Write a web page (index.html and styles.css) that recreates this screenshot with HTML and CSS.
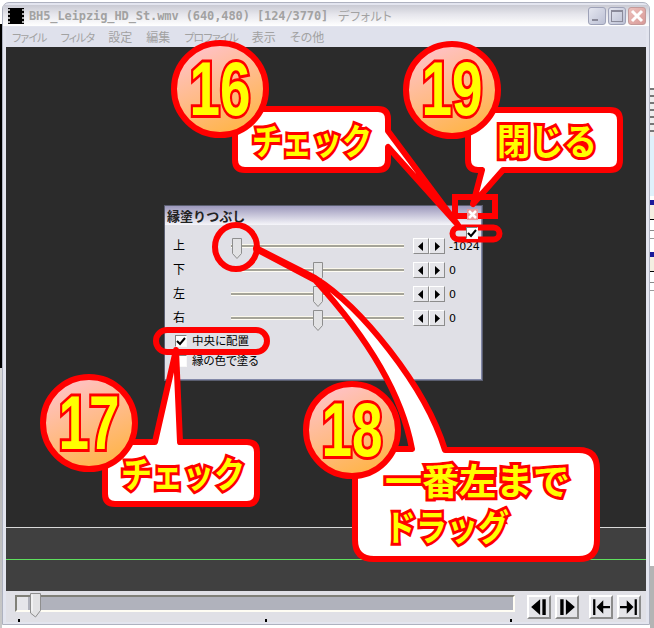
FILE: index.html
```html
<!DOCTYPE html>
<html lang="ja">
<head>
<meta charset="utf-8">
<title>BH5_Leipzig_HD_St.wmv</title>
<link rel="stylesheet" href="styles.css">
</head>
<body>
<div class="desktop">
  <div class="sliver sliver-left-black"></div>
  <div class="sliver sliver-left-grey"></div>
  <div class="sliver sliver-right-a"></div>
  <div class="sliver sliver-right-b"></div>
  <div class="sliver sliver-right-c"></div>
  <div class="sliver sliver-right-d"></div>
  <div class="sliver sliver-right-e"></div>

  <div class="window">
    <header class="titlebar">
      <svg class="film" width="16" height="16" viewBox="0 0 16 16"><rect width="16" height="16" fill="#000"/><path d="M0 1h2v2H0zM0 5h2v2H0zM0 9h2v2H0zM0 13h2v2H0zM14 1h2v2h-2zM14 5h2v2h-2zM14 9h2v2h-2zM14 13h2v2h-2z" fill="#aaa"/></svg>
      <span class="title-text">BH5_Leipzig_HD_St.wmv (640,480) [124/3770]</span>
      <span class="title-profile">デフォルト</span>
      <span class="win-controls">
        <span class="win-btn"><svg width="18" height="18" viewBox="0 0 18 18"><rect x="4" y="12" width="6" height="2" fill="#8a8a9a"/></svg></span>
        <span class="win-btn"><svg width="18" height="18" viewBox="0 0 18 18"><rect x="3.500" y="3.500" width="11" height="11" fill="none" stroke="#8a8a9a"/><rect x="3" y="3" width="12" height="2" fill="#8a8a9a"/></svg></span>
        <span class="win-btn win-close"><svg width="18" height="18" viewBox="0 0 18 18"><path d="M4 4l10 10M14 4L4 14" stroke="#fff" stroke-width="3"/></svg></span>
      </span>
    </header>
    <nav class="menu">
      <span class="m-kana">ファイル</span><span class="m-kana">フィルタ</span><span class="m-kanji">設定</span><span class="m-kanji">編集</span><span class="m-kana">プロファイル</span><span class="m-kanji">表示</span><span class="m-kanji">その他</span>
    </nav>
    <main class="view"></main>
    <div class="band band-top"></div>
    <div class="band band-bottom"></div>
    <footer class="seek">
      <div class="seek-track"><span class="seek-start"></span>
        <svg class="seek-thumb" width="12" height="25" viewBox="0 0 12 25"><path d="M.5.5h10v17L5.500 24 .5 20z" fill="#e2e2e4" stroke="#8e8e8e"/><path d="M1.500 1.500h1v17h-1z" fill="#fff"/></svg>
      </div>
      <div class="transport">
        <span class="tbtn"><svg width="18" height="18" viewBox="0 0 16 16"><path d="M1 8l8-7v14zM11 1h3v14h-3z"/></svg></span>
        <span class="tbtn"><svg width="18" height="18" viewBox="0 0 16 16"><path d="M2 1h3v14H2zM7 1l8 7-8 7z"/></svg></span>
        <span class="tbtn tbtn-far"><svg width="18" height="18" viewBox="0 0 16 16"><path d="M1 1h2v14H1zM4 8l6-6v5h6v2h-6v5z"/></svg></span>
        <span class="tbtn"><svg width="18" height="18" viewBox="0 0 16 16"><path d="M13 1h2v14h-2zM12 8L6 2v5H0v2h6v5z"/></svg></span>
      </div>
      <span class="tick tick-a"></span><span class="tick tick-b"></span><span class="tick tick-c"></span>
    </footer>
  </div>

  <section class="dialog">
    <header class="dlg-title"><span>縁塗りつぶし</span>
      <span class="dlg-close"><svg width="11" height="11" viewBox="0 0 11 11"><path d="M2 2l7 7M9 2L2 9" stroke="#fff" stroke-width="2.500"/></svg></span>
    </header>
    <div class="dlg-body">
      <span class="check check-top"><svg class="tick-mark" width="10" height="10" viewBox="0 0 10 10"><path d="M1 5l3 3 5-6" fill="none" stroke="#000" stroke-width="2"/></svg></span>
      <div class="row">
        <span class="lbl">上</span>
        <span class="track"><svg class="thumb thumb-min" width="10" height="21" viewBox="0 0 10 21"><path d="M.5.500h9v15L5 20.500.5 15.500z" fill="#e2e2e4" stroke="#8e8e8e"/></svg></span>
        <span class="steps"><span class="step"><svg width="6" height="9" viewBox="0 0 6 9"><path d="M5 0v9L0 4.500z"/></svg></span><span class="step"><svg width="6" height="9" viewBox="0 0 6 9"><path d="M1 0v9l5-4.500z"/></svg></span></span>
        <span class="val">-1024</span>
      </div>
      <div class="row">
        <span class="lbl">下</span>
        <span class="track"><svg class="thumb thumb-mid" width="10" height="21" viewBox="0 0 10 21"><path d="M.5.500h9v15L5 20.500.5 15.500z" fill="#e2e2e4" stroke="#8e8e8e"/></svg></span>
        <span class="steps"><span class="step"><svg width="6" height="9" viewBox="0 0 6 9"><path d="M5 0v9L0 4.500z"/></svg></span><span class="step"><svg width="6" height="9" viewBox="0 0 6 9"><path d="M1 0v9l5-4.500z"/></svg></span></span>
        <span class="val">0</span>
      </div>
      <div class="row">
        <span class="lbl">左</span>
        <span class="track"><svg class="thumb thumb-mid" width="10" height="21" viewBox="0 0 10 21"><path d="M.5.500h9v15L5 20.500.5 15.500z" fill="#e2e2e4" stroke="#8e8e8e"/></svg></span>
        <span class="steps"><span class="step"><svg width="6" height="9" viewBox="0 0 6 9"><path d="M5 0v9L0 4.500z"/></svg></span><span class="step"><svg width="6" height="9" viewBox="0 0 6 9"><path d="M1 0v9l5-4.500z"/></svg></span></span>
        <span class="val">0</span>
      </div>
      <div class="row">
        <span class="lbl">右</span>
        <span class="track"><svg class="thumb thumb-mid" width="10" height="21" viewBox="0 0 10 21"><path d="M.5.500h9v15L5 20.500.5 15.500z" fill="#e2e2e4" stroke="#8e8e8e"/></svg></span>
        <span class="steps"><span class="step"><svg width="6" height="9" viewBox="0 0 6 9"><path d="M5 0v9L0 4.500z"/></svg></span><span class="step"><svg width="6" height="9" viewBox="0 0 6 9"><path d="M1 0v9l5-4.500z"/></svg></span></span>
        <span class="val">0</span>
      </div>
      <label class="opt"><span class="check"><svg class="tick-mark" width="10" height="10" viewBox="0 0 10 10"><path d="M1 5l3 3 5-6" fill="none" stroke="#000" stroke-width="2"/></svg></span>中央に配置</label>
      <label class="opt"><span class="check"></span>縁の色で塗る</label>
    </div>
  </section>

  <svg class="notes" width="654" height="628" viewBox="0 0 654 628">
    <defs>
      <linearGradient id="badge" x1="0.25" y1="0" x2="0.7" y2="1">
        <stop offset="0" stop-color="#ffc2cc"/>
        <stop offset="1" stop-color="#ffb444"/>
      </linearGradient>
    </defs>
    <g class="ring">
      <rect x="455" y="197" width="40" height="19"/>
      <rect x="452.500" y="227.500" width="47" height="12" rx="6"/>
      <ellipse cx="236" cy="247" rx="21" ry="22"/>
      <rect x="156" y="330" width="111" height="22" rx="11"/>
    </g>
    <!-- 18 bubble -->
    <path class="bubble" d="M256 249L315 280C370 340 402 395 412 449H372Q355 449 355 469V540Q355 559 374 559H579Q597 559 597 540V469Q597 450 579 450H445C425 385 360 306 315 278L256 248Z"/>
    <!-- 16 bubble -->
    <path class="bubble" d="M245 109H378Q388 109 388 119V131L458 225L388 147V160Q388 170 378 170H245Q235 170 235 160V119Q235 109 245 109Z"/>
    <!-- 19 bubble -->
    <path class="bubble" d="M478 110H610Q620 110 620 120V160Q620 170 610 170H503L473 204L482 170H478Q468 170 468 160V120Q468 110 478 110Z"/>
    <!-- 17 bubble -->
    <path class="bubble" d="M115 442H155L176 350L180 442H247Q257 442 257 452V494Q257 504 247 504H115Q105 504 105 494V452Q105 442 115 442Z"/>

    <circle class="badge" cx="220" cy="89" r="46"/>
    <circle class="badge" cx="452" cy="90" r="46"/>
    <circle class="badge" cx="89" cy="423" r="46"/>
    <circle class="badge" cx="352" cy="430" r="46"/>
    <text class="num" x="220" y="115" textLength="61" lengthAdjust="spacingAndGlyphs">16</text>
    <text class="num" x="452" y="115" textLength="61" lengthAdjust="spacingAndGlyphs">19</text>
    <text class="num" x="89" y="449" textLength="61" lengthAdjust="spacingAndGlyphs">17</text>
    <text class="num" x="352" y="456" textLength="61" lengthAdjust="spacingAndGlyphs">18</text>
    <text class="say" x="252" y="155" textLength="120" lengthAdjust="spacingAndGlyphs">チェック</text>
    <text class="say" x="497" y="155" textLength="100" lengthAdjust="spacingAndGlyphs">閉じる</text>
    <text class="say" x="121" y="488" textLength="124" lengthAdjust="spacingAndGlyphs">チェック</text>
    <text class="say" x="385" y="495" textLength="185" lengthAdjust="spacingAndGlyphs">一番左まで</text>
    <text class="say" x="385" y="541" textLength="124" lengthAdjust="spacingAndGlyphs">ドラッグ</text>
  </svg>
</div>
</body>
</html>
```
FILE: styles.css
```css
* { box-sizing: border-box; }
html, body { margin: 0; padding: 0; }
body { background: #fff; font-family: "Noto Sans CJK JP", "Liberation Sans", sans-serif; }

.desktop { position: relative; width: 654px; height: 628px; overflow: hidden; background: #fff; }

.sliver { position: absolute; }
.sliver-left-black { left: 0; top: 24px; width: 2px; height: 344px; background: #000; }
.sliver-left-grey { left: 0; top: 368px; width: 2px; height: 260px; background: linear-gradient(#d8d8d8, #b8b8b8 40%, #c8c8c8); }
.sliver-right-a { left: 650px; top: 88px; width: 4px; height: 50px; background: repeating-linear-gradient(#777 0 2px, #eee 2px 7px); }
.sliver-right-b { left: 650px; top: 136px; width: 4px; height: 60px; background: #dff1fb; }
.sliver-right-c { left: 650px; top: 200px; width: 4px; height: 60px; background: linear-gradient(#1a1a9a 0 5px, #f4efe2 5px 19px, #000 19px 20px, #fff 20px 30px, #888 30px 31px, #fff 31px 38px, #999 38px 39px, #fff 39px); }
.sliver-right-d { left: 650px; top: 252px; width: 4px; height: 60px; background: linear-gradient(#1a1a9a 0 5px, #f4efe2 5px 19px, #000 19px 20px, #fff 20px 30px, #888 30px 31px, #fff 31px 38px, #999 38px 39px, #fff 39px); }
.sliver-right-e { left: 650px; top: 566px; width: 4px; height: 62px; background: #b4b4b4; }

/* main window */
.window {
  position: absolute; left: 2px; top: 2px; width: 648px; height: 623px;
  display: flex; flex-direction: column;
  padding: 2px 3px;
  background: #e3e5ef;
  border: 1px solid #aeb2c0;
  border-radius: 7px 7px 0 0;
}
.titlebar {
  display: flex; align-items: center; height: 21px; flex: none;
  margin: 0 -3px; padding: 0 3px 0 5px;
  background: linear-gradient(#c9cad3, #e6e6ec 45%, #fff);
  color: #a2a2a2; font-size: 12px;
}
.film { flex: none; }
.title-text { margin-left: 5px; font-family: "DejaVu Sans Mono", monospace; font-weight: bold; font-size: 12px; letter-spacing: -.1px; white-space: nowrap; }
.title-profile { margin-left: 10px; font-feature-settings: "palt"; letter-spacing: .6px; }
.win-controls { display: flex; gap: 2px; margin-left: auto; }
.win-btn {
  display: block; width: 18px; height: 18px;
  background: linear-gradient(135deg, #e4e6f0, #bcc0d4);
  border: 1px solid #9ea2b8; border-radius: 3px;
}
.win-btn svg { display: block; margin: -1px; }
.win-close { background: linear-gradient(135deg, #ecc0bc, #d89a98); border-color: #c49a9a; }

.menu {
  display: flex; gap: 14px; align-items: center; flex: none;
  height: 20px; margin-top: 1px; padding-left: 6px;
  background: #dfe1ec; color: #a2a2a2; font-size: 12px; line-height: 1;
  font-feature-settings: "palt";
}
.m-kana { font-size: 11px; letter-spacing: -.9px; }
.m-kanji { font-size: 12px; }
.view { height: 480px; flex: none; background: #2b2b2b; }
.band { flex: none; background: #404040; }
.band-top { height: 32px; border-top: 1px solid #d8d8d8; }
.band-bottom { height: 32px; border-top: 1px solid #5ee05e; }

.seek { position: relative; flex: 1; display: flex; align-items: flex-start; background: #e0e0e6; padding: 4px 0 0 9px; }
.seek-track {
  position: relative; width: 500px; height: 17px;
  background: #b0b2bc;
  border: 2px solid; border-color: #808078 #fffdf4 #fffdf4 #808078;
}
.seek-start { display: block; width: 11px; height: 100%; background: #e6e6ea; }
.seek-thumb { position: absolute; left: 13px; top: -4px; }
.transport { display: flex; gap: 4px; margin-left: 12px; }
.tbtn {
  display: flex; align-items: center; justify-content: center;
  width: 24px; height: 24px;
  background: #e4e4e8;
  border: 2px solid; border-color: #fff #8c8c8c #8c8c8c #fff;
}
.tbtn-far { margin-left: 6px; }
.tick { position: absolute; top: 28px; width: 2px; height: 3px; background: #000; }
.tick-a { left: 12px; }
.tick-b { left: 259px; }
.tick-c { left: 504px; }

/* filter dialog */
.dialog {
  position: absolute; left: 164px; top: 205px; width: 319px; height: 176px;
  display: flex; flex-direction: column;
  background: #e0e0e6;
  border: 1px solid #8288a8;
  outline: 1px solid #5a5e70; outline-offset: -1px;
  border-right-width: 2px; border-bottom-width: 2px;
  color: #000;
}
.dlg-title {
  position: relative; flex: none; height: 19px; padding: 0 0 0 2px;
  background: linear-gradient(#9c98bc, #f6f6fa);
  font-size: 13px; font-weight: 700; line-height: 20px; color: #222;
}
.dlg-close {
  position: absolute; z-index: 2; right: 3px; top: 3px; width: 11px; height: 11px;
  background: #e89c9c;
}
.dlg-close svg { display: block; }
.dlg-body { position: relative; flex: 1; padding-top: 9px; }
.row { display: flex; align-items: center; height: 24px; font-size: 12px; }
.lbl { width: 66px; padding: 0 0 4px 8px; flex: none; }
.track {
  position: relative; width: 173px; height: 4px; flex: none;
  background: #a5a498;
  border-top: 1px solid #fbf8ec; border-bottom: 1px solid #fffdf4;
}
.thumb { position: absolute; top: -7px; }
.thumb-min { left: 1px; }
.thumb-mid { left: 82px; }
.steps { display: flex; margin-left: 9px; }
.step {
  display: flex; align-items: center; justify-content: center;
  width: 16px; height: 16px; background: #e6e6ea;
  border: 1px solid; border-color: #fff #8c8c8c #8c8c8c #fff;
}
.step svg { display: block; }
.val { margin-left: 4px; font-family: "DejaVu Sans", sans-serif; font-size: 11px; letter-spacing: -.3px; }
.opt { display: flex; align-items: center; gap: 5px; height: 20px; padding-left: 10px; font-size: 11.500px; line-height: 1; font-feature-settings: "palt"; }
.opt:first-of-type { margin-top: 1px; }
.check {
  display: flex; align-items: center; justify-content: center;
  width: 12px; height: 12px; flex: none; background: #fff;
  border: 1px solid; border-color: #808080 #f8f8f8 #f8f8f8 #808080;
}
.check-top { position: absolute; z-index: 2; right: 3px; top: 2px; }
.tick-mark { display: block; }

/* red annotations */
.notes { position: absolute; left: 0; top: 0; pointer-events: none; }
.ring { fill: none; stroke: #f00; stroke-width: 6; }
.bubble { fill: #fff; stroke: #f00; stroke-width: 6; stroke-linejoin: round; }
.badge { fill: url(#badge); stroke: #f00; stroke-width: 6; }
.num {
  fill: #ff0; stroke: #f00; stroke-width: 6; paint-order: stroke; stroke-linejoin: miter;
  font-family: "Liberation Sans", sans-serif; font-weight: 700; font-size: 76px;
  text-anchor: middle;
}
.say {
  fill: #ff0; stroke: #f00; stroke-width: 6; paint-order: stroke; stroke-linejoin: miter;
  font-family: "Noto Sans CJK JP", sans-serif; font-weight: 700; font-size: 36px;
}
```
